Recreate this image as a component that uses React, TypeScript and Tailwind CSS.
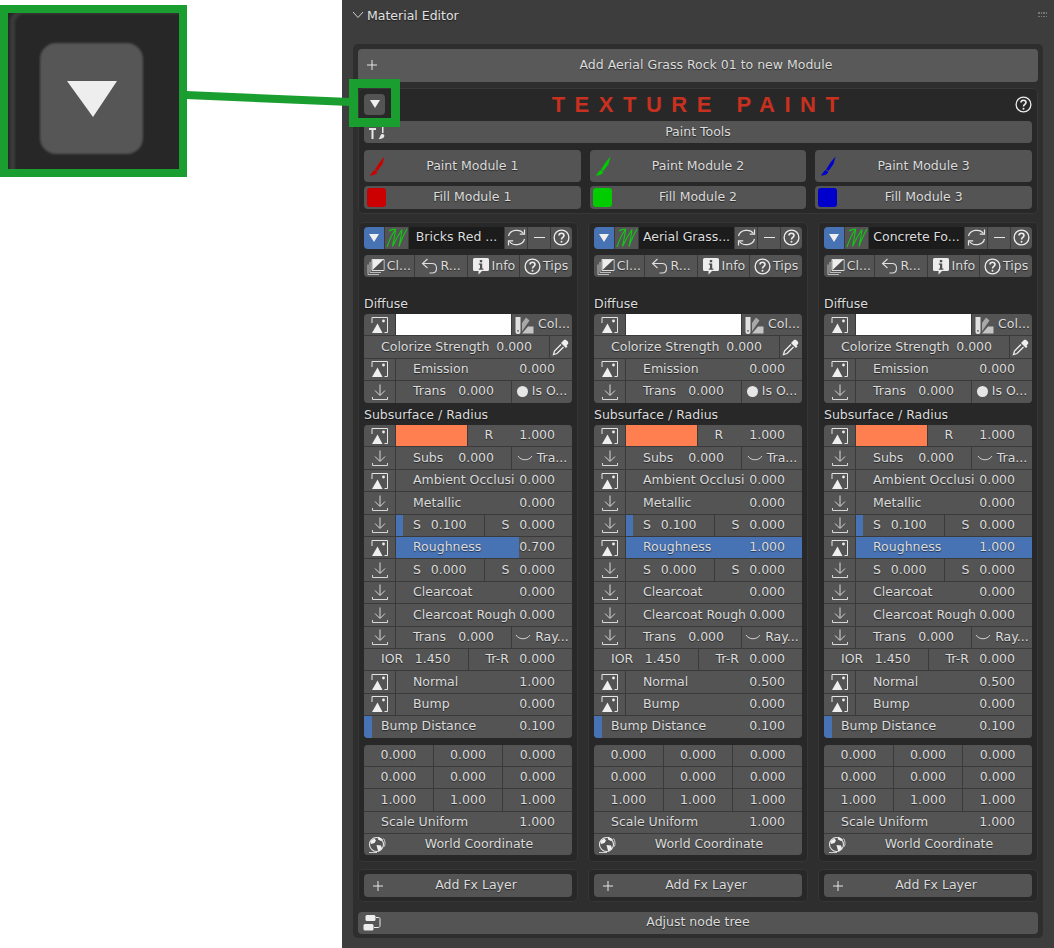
import type { ReactNode } from 'react'

const shadow = '[text-shadow:0_1px_1px_rgba(0,0,0,0.55)]'

function ImageIcon() {
  return (
    <svg width="18" height="18" viewBox="0 0 18 18" fill="none" className="shrink-0">
      <path d="M1 7V1.5h15.5v15h-3" stroke="#e6e6e6" strokeWidth="1" />
      <path d="M1 17 L6.5 7.5 L11.5 17Z" fill="#efefef" />
      <circle cx="12.5" cy="5" r="1.4" fill="#efefef" />
    </svg>
  )
}

function ImportIcon() {
  return (
    <svg width="18" height="18" viewBox="0 0 18 18" fill="none" stroke="#d8d8d8" strokeWidth="1" className="shrink-0">
      <path d="M9 1.5V12M4 7.5l5 5 5-5" />
      <path d="M1.5 14v2.5h15V14" />
    </svg>
  )
}

function HelpIcon({ size = 17 }: { size?: number }) {
  return (
    <svg width={size} height={size} viewBox="0 0 17 17" fill="none" className="shrink-0">
      <circle cx="8.5" cy="8.5" r="7.4" stroke="#ededed" strokeWidth="1.3" />
      <path d="M6 6.6c0-3.2 5-3.2 5 0 0 1.9-2.5 1.9-2.5 3.9" stroke="#ededed" strokeWidth="1.6" />
      <circle cx="8.5" cy="12.8" r="1" fill="#ededed" />
    </svg>
  )
}

function RefreshIcon() {
  return (
    <svg width="19" height="19" viewBox="0 0 19 19" fill="none" stroke="#e6e6e6" strokeWidth="1.2" className="shrink-0">
      <path d="M1.5 8C3 1.5 13 .5 16.5 5.5" />
      <path d="M17.5 1.5v4.7h-4.7" />
      <path d="M17.5 11C16 17.5 6 18.5 2.5 13.5" />
      <path d="M1.5 17.5v-4.7h4.7" />
    </svg>
  )
}

function ScriptM() {
  return (
    <svg width="22" height="20" viewBox="0 0 22 20" fill="none" stroke="#12c912" strokeWidth="1.1" className="shrink-0">
      <path d="M1 19C3 13 6 6 9.5 1.5 9 7 7.5 13 6.5 18.5 9.5 12 13 6 16 1.5 15.5 7 14 13 13 18.5 15 13 18 6 21 1" />
      <path d="M3 3c2-1.5 4-2 6.5-1.5" />
    </svg>
  )
}

function CopyIcon() {
  return (
    <svg width="18" height="18" viewBox="0 0 18 18" fill="none" className="shrink-0">
      <path d="M5 2.5h12v11H5z" stroke="#dedede" />
      <path d="M6 13L16.5 3v10z" fill="#4d4d4d" />
      <path d="M5.500 13L16 3H5.500z" fill="#eeeeee" />
      <path d="M3 5v10.500h11M1 7.500v10h11" stroke="#bdbdbd" />
    </svg>
  )
}

function UndoIcon() {
  return (
    <svg width="18" height="18" viewBox="0 0 18 18" fill="none" stroke="#dedede" strokeWidth="1.1" className="shrink-0">
      <path d="M6.500 2L1.500 6.500 6.500 11" />
      <path d="M2 6.500h9c6 0 6 9.500 0 9.500H8.500" />
    </svg>
  )
}

function InfoIcon() {
  return (
    <svg width="18" height="18" viewBox="0 0 18 18" className="shrink-0">
      <path d="M2.500 1h13A1.500 1.500 0 0 1 17 2.500v10a1.500 1.500 0 0 1-1.500 1.500H10l-3.500 3.500V14h-4A1.500 1.500 0 0 1 1 12.500v-10A1.500 1.500 0 0 1 2.500 1z" fill="#ededed" />
      <rect x="7.800" y="3" width="2.400" height="2.300" fill="#4f4f4f" />
      <path d="M6.800 6.500h3.400v5h1.200v1.300H6.800v-1.300H8V7.800H6.800z" fill="#4f4f4f" />
    </svg>
  )
}

function SwatchIcon() {
  return (
    <svg width="20" height="18" viewBox="0 0 20 18" className="shrink-0">
      <path d="M1.500 1h5v15a2 2 0 0 1-2 2h-1a2 2 0 0 1-2-2z" fill="#e0e0e0" />
      <path d="M8 15.500V7l4-5.500 3.500 3z" fill="#a8a8a8" />
      <path d="M8 17.500l6-7h5.500v7z" fill="#c4c4c4" />
      <circle cx="4" cy="14.800" r="0.900" fill="#555" />
    </svg>
  )
}

function DropperIcon() {
  return (
    <svg width="18" height="18" viewBox="0 0 18 18" fill="none" className="shrink-0">
      <path d="M10.500 3.500l1.500-1.500c1.500-1.500 5.500 2 4 4l-1.500 1.500 1 1-1.500 1.500-5-5 1.500-1.500z" fill="#efefef" />
      <path d="M9 6.500L2.500 13 1.500 16.500 5 15.500 11.500 9" stroke="#efefef" strokeWidth="1.300" />
    </svg>
  )
}

function GlobeIcon() {
  return (
    <svg width="18" height="18" viewBox="0 0 18 18" fill="none" className="shrink-0">
      <circle cx="8.500" cy="8.500" r="7" stroke="#e6e6e6" strokeWidth="1.100" />
      <path d="M2.500 5l4-2.500 1.500 2-1.500 2.500L3 8zM8.500 9l4.500.500 1 3-3.500 3-1-2.500z" fill="#efefef" />
      <path d="M10 1c2 .3 4 1.500 5 3l-2 1-3-1.500z" fill="#efefef" />
      <path d="M15.500 2.500c1.500 2 2 5 1 8M1 16.500h8" stroke="#cfcfcf" />
    </svg>
  )
}

function BrushIcon({ color }: { color: string }) {
  return (
    <svg width="16" height="20" viewBox="0 0 16 20" className="shrink-0">
      <path d="M15.500 0.500L13.500 8 8.500 15 6 13.500 10.500 6.500z" fill={color} />
      <path d="M5.500 14l2.700 1.700c-.5 2.500-3 3.800-7.700 3.800 2-1 2.500-3.800 5-5.500z" fill={color} />
    </svg>
  )
}

function ToolsIcon() {
  return (
    <svg width="18" height="17" viewBox="0 0 18 17" className="shrink-0">
      <rect x="0" y="0" width="7" height="4" fill="#e6e6e6" />
      <rect x="0" y="5" width="7" height="2" fill="#e6e6e6" />
      <rect x="2.500" y="7" width="2" height="9" fill="#e6e6e6" />
      <rect x="13" y="0" width="1.500" height="10" fill="#e6e6e6" />
      <path d="M12.500 11c2.500-.5 3.500 1.500 2.500 3-.8 1.500-3 2-5.500 2 1.500-.8 1.500-3.500 3-5z" fill="#e6e6e6" />
    </svg>
  )
}

function NodeTreeIcon() {
  return (
    <svg width="18" height="18" viewBox="0 0 18 18" fill="none" className="shrink-0">
      <rect x="2.500" y="1" width="10" height="6" rx="1.500" fill="#ededed" />
      <rect x="0.500" y="10" width="10" height="6.500" rx="1.500" fill="#ededed" />
      <path d="M13 3.500h2.500c1.500 0 1.500 1 1.500 2v6c0 1.500-1 2-2 2H11" stroke="#ededed" />
    </svg>
  )
}

function PlusIcon() {
  return (
    <svg width="12" height="12" viewBox="0 0 12 12" stroke="#e6e6e6" className="shrink-0">
      <path d="M6 1v10M1 6h10" />
    </svg>
  )
}

function Triangle({ className }: { className?: string }) {
  return (
    <svg viewBox="0 0 10 8" className={className}>
      <path d="M0 0h10L5 8z" fill="#efefef" />
    </svg>
  )
}

function Cell({ children, className = '', style }: { children?: ReactNode; className?: string; style?: React.CSSProperties }) {
  return (
    <div className={`relative flex min-w-0 items-center overflow-hidden whitespace-nowrap bg-[#545454] ${className}`} style={style}>
      {children}
    </div>
  )
}

// blender style number field: label left, value right, optional slider fill
function Field({ label, value, fill, className = 'flex-1' }: { label?: string; value: string; fill?: number; className?: string }) {
  return (
    <Cell className={`justify-between px-[17px] ${className}`}>
      {fill !== undefined && <div className="absolute inset-y-0 left-0 bg-[#4772b3]" style={{ width: `${fill * 100}%` }} />}
      <span className={`relative ${shadow}`}>{label}</span>
      <span className={`relative ${shadow}`}>{value}</span>
    </Cell>
  )
}

function IconCell({ kind }: { kind: 'image' | 'import' }) {
  return (
    <Cell className="w-[31px] shrink-0 justify-center">
      {kind === 'image' ? <ImageIcon /> : <ImportIcon />}
    </Cell>
  )
}

function Row({ children }: { children: ReactNode }) {
  return <div className="flex h-[21.4px] gap-px">{children}</div>
}

function Group({ children }: { children: ReactNode }) {
  return <div className="flex flex-col gap-px overflow-hidden rounded-[4px] bg-[#3a3a3a]">{children}</div>
}

function IconText({ icon, text, className = '' }: { icon: ReactNode; text: string; className?: string }) {
  return (
    <Cell className={`h-full justify-center gap-[2px] ${className}`}>
      {icon}
      <span className={shadow}>{text}</span>
    </Cell>
  )
}

function WideButton({ icon, text, className = '' }: { icon: ReactNode; text: string; className?: string }) {
  return (
    <div className={`flex items-center rounded-[4px] bg-[#545454] px-[6px] ${className}`}>
      <div className="flex w-[16px] shrink-0 items-center justify-center">{icon}</div>
      <span className={`flex-1 text-center ${shadow}`}>{text}</span>
    </div>
  )
}

function ModuleColumn({ name, roughness, normal }: { name: string; roughness: number; normal: string }) {
  return (
    <div className="flex flex-col">
      <div className="flex h-[640px] flex-col rounded-[5px] border border-[#363636] bg-[#282828] px-[5px] pt-[4px]">
        <div className="flex h-[21.5px] gap-px overflow-hidden rounded-[4px] bg-[#3a3a3a]">
          <div className="flex w-[20px] shrink-0 items-center justify-center bg-[#4772b3]">
            <Triangle className="w-[10px]" />
          </div>
          <Cell className="w-[23px] shrink-0 justify-center">
            <ScriptM />
          </Cell>
          <div className={`flex min-w-0 flex-1 items-center justify-center bg-[#1c1c1c] whitespace-nowrap ${shadow}`}>{name}</div>
          <Cell className="w-[22px] shrink-0 justify-center">
            <RefreshIcon />
          </Cell>
          <Cell className="w-[22px] shrink-0 justify-center">
            <div className="h-px w-[11px] bg-[#e6e6e6]" />
          </Cell>
          <Cell className="w-[21px] shrink-0 justify-center">
            <HelpIcon />
          </Cell>
        </div>
        <div className="mt-[6.500px] flex h-[22px] gap-px overflow-hidden rounded-[4px] bg-[#3a3a3a]">
          <IconText icon={<CopyIcon />} text="Cl..." className="flex-[50]" />
          <IconText icon={<UndoIcon />} text="R..." className="flex-[52]" />
          <IconText icon={<InfoIcon />} text="Info" className="flex-[52]" />
          <IconText icon={<HelpIcon />} text="Tips" className="flex-[52]" />
        </div>

        <div className={`mt-[16px] h-[21px] leading-[21px] ${shadow}`}>Diffuse</div>
        <Group>
          <Row>
            <IconCell kind="image" />
            <div className="w-[115px] shrink-0 bg-white" />
            <Cell className="flex-1 justify-center gap-[4px]">
              <SwatchIcon />
              <span className={shadow}>Col...</span>
            </Cell>
          </Row>
          <Row>
            <Field label="Colorize Strength" value="0.000" />
            <Cell className="w-[22px] shrink-0 justify-center">
              <DropperIcon />
            </Cell>
          </Row>
          <Row>
            <IconCell kind="image" />
            <Field label="Emission" value="0.000" />
          </Row>
          <Row>
            <IconCell kind="import" />
            <Field label="Trans" value="0.000" className="w-[115px] shrink-0" />
            <Cell className="flex-1 justify-center gap-[4px]">
              <div className="size-[11px] rounded-full bg-[#e6e6e6]" />
              <span className={shadow}>Is O...</span>
            </Cell>
          </Row>
        </Group>

        <div className={`mt-[1px] h-[21.500px] leading-[21.500px] ${shadow}`}>Subsurface / Radius</div>
        <Group>
          <Row>
            <IconCell kind="image" />
            <div className="flex-1 bg-[#ff7f50]" />
            <Field label="R" value="1.000" />
          </Row>
          <Row>
            <IconCell kind="import" />
            <Field label="Subs" value="0.000" className="w-[115px] shrink-0" />
            <Cell className="flex-1 justify-center gap-[4px]">
              <svg width="16" height="6" viewBox="0 0 16 6" fill="none" stroke="#cfcfcf" className="shrink-0">
                <path d="M1 1c3 5 11 5 14 0" />
              </svg>
              <span className={shadow}>Tra...</span>
            </Cell>
          </Row>
          <Row>
            <IconCell kind="image" />
            <Field label="Ambient Occlusi" value="0.000" />
          </Row>
          <Row>
            <IconCell kind="import" />
            <Field label="Metallic" value="0.000" />
          </Row>
          <Row>
            <IconCell kind="import" />
            <Field label="S" value="0.100" fill={0.08} />
            <Field label="S" value="0.000" />
          </Row>
          <Row>
            <IconCell kind="image" />
            <Field label="Roughness" value={roughness.toFixed(3)} fill={roughness} />
          </Row>
          <Row>
            <IconCell kind="import" />
            <Field label="S" value="0.000" />
            <Field label="S" value="0.000" />
          </Row>
          <Row>
            <IconCell kind="import" />
            <Field label="Clearcoat" value="0.000" />
          </Row>
          <Row>
            <IconCell kind="import" />
            <Field label="Clearcoat Rough" value="0.000" />
          </Row>
          <Row>
            <IconCell kind="import" />
            <Field label="Trans" value="0.000" className="w-[115px] shrink-0" />
            <Cell className="flex-1 justify-center gap-[4px]">
              <svg width="16" height="6" viewBox="0 0 16 6" fill="none" stroke="#cfcfcf" className="shrink-0">
                <path d="M1 1c3 5 11 5 14 0" />
              </svg>
              <span className={shadow}>Ray...</span>
            </Cell>
          </Row>
          <Row>
            <Field label="IOR" value="1.450" />
            <Field label="Tr-R" value="0.000" />
          </Row>
          <Row>
            <IconCell kind="image" />
            <Field label="Normal" value={normal} />
          </Row>
          <Row>
            <IconCell kind="image" />
            <Field label="Bump" value="0.000" />
          </Row>
          <Row>
            <Field label="Bump Distance" value="0.100" fill={0.04} />
          </Row>
        </Group>

        <div className="mt-[7px]">
          <Group>
            {[0, 0, 1].map((v, i) => (
              <Row key={i}>
                {[0, 1, 2].map((c) => (
                  <Cell key={c} className={`flex-1 justify-center ${shadow}`}>
                    {v.toFixed(3)}
                  </Cell>
                ))}
              </Row>
            ))}
            <Row>
              <Field label="Scale Uniform" value="1.000" />
            </Row>
            <Row>
              <Cell className="flex-1 pl-[4px]">
                <GlobeIcon />
                <span className={`flex-1 text-center ${shadow}`}>World Coordinate</span>
              </Cell>
            </Row>
          </Group>
        </div>
      </div>

      <div className="mt-[7px] h-[33px] rounded-[5px] border border-[#363636] bg-[#282828] px-[5px] pt-[4px]">
        <WideButton icon={<PlusIcon />} text="Add Fx Layer" className="h-[23px]" />
      </div>
    </div>
  )
}

export default function App() {
  return (
    <div className="relative flex h-[948px] w-[1054px] overflow-hidden bg-white font-['DejaVu_Sans',sans-serif] text-[12.500px] text-[#dcdcdc]">
      <div className="w-[342px] shrink-0" />

      <div className="flex min-w-0 flex-1 flex-col bg-[#3d3d3d]">
        {/* Panel header */}
        <div className="flex h-[44px] shrink-0 items-start pt-[7px] pl-[10px] pr-[7px]">
          <svg width="12" height="8" viewBox="0 0 12 8" fill="none" stroke="#d0d0d0" className="mt-[4px] shrink-0">
            <path d="M1 1l5 5.500L11 1" />
          </svg>
          <span className={`ml-[3px] flex-1 leading-[17px] text-[#e2e2e2] ${shadow}`}>Material Editor</span>
          <div className="mt-[5px] grid grid-cols-4 gap-x-px gap-y-[2px]">
            {Array.from({ length: 8 }).map((_, i) => (
              <div key={i} className="size-[1.500px] bg-[#777]" />
            ))}
          </div>
        </div>

        {/* Main box */}
        <div className="mx-[11px] flex h-[894px] flex-col rounded-[5px] bg-[#2e2e2e] px-[5px] pt-[5px]">
          <WideButton icon={<PlusIcon />} text="Add Aerial Grass Rock 01 to new Module" className="h-[32.500px] shrink-0 bg-[#595959]" />

          <div className="mt-[6.500px] flex h-[126px] shrink-0 flex-col rounded-[5px] border border-[#383838] bg-[#282828] px-[5px] pt-[4px]">
            <div className="flex h-[22px] items-center">
              <div className="flex size-[21px] items-center justify-center rounded-[4px] bg-[#545454]">
                <Triangle className="w-[10px]" />
              </div>
              <div className="flex-1 text-center font-['Liberation_Sans_Narrow','Liberation_Sans',sans-serif] text-[22px] font-bold tracking-[9.500px] text-[#c8301f]">
                TEXTURE PAINT
              </div>
              <HelpIcon />
            </div>
            <div className="mt-[6px] flex h-[22px] items-center rounded-[4px] bg-[#545454] pl-[5px]">
              <div className="-mt-[1px] w-[18px] shrink-0">
                <ToolsIcon />
              </div>
              <span className={`flex-1 pr-[23px] text-center ${shadow}`}>Paint Tools</span>
            </div>
            <div className="mt-[7px] grid grid-cols-3 gap-x-[9px] gap-y-[4px]">
              {[
                { n: 1, c: '#cc0000' },
                { n: 2, c: '#00cc00' },
                { n: 3, c: '#0000cc' },
              ].map((m) => (
                <div key={m.n} className="flex h-[32px] items-center rounded-[4px] bg-[#545454] pl-[5px]">
                  <BrushIcon color={m.c} />
                  <span className={`flex-1 pr-[21px] text-center ${shadow}`}>Paint Module {m.n}</span>
                </div>
              ))}
              {[
                { n: 1, c: '#cc0000' },
                { n: 2, c: '#00cc00' },
                { n: 3, c: '#0000cc' },
              ].map((m) => (
                <div key={m.n} className="flex h-[23px] items-center rounded-[4px] bg-[#545454] pl-[3px]">
                  <div className="size-[19px] shrink-0 rounded-[3px]" style={{ backgroundColor: m.c }} />
                  <span className={`flex-1 pr-[22px] text-center ${shadow}`}>Fill Module {m.n}</span>
                </div>
              ))}
            </div>
          </div>

          <div className="mt-[8px] grid shrink-0 grid-cols-3 gap-x-[10px]">
            <ModuleColumn name="Bricks Red ..." roughness={0.7} normal="1.000" />
            <ModuleColumn name="Aerial Grass..." roughness={1} normal="0.500" />
            <ModuleColumn name="Concrete Fo..." roughness={1} normal="0.500" />
          </div>

          <div className="mt-[9.500px] flex h-[22px] shrink-0 items-center rounded-[4px] bg-[#545454] pl-[5px]">
            <NodeTreeIcon />
            <span className={`flex-1 pr-[23px] text-center ${shadow}`}>Adjust node tree</span>
          </div>
        </div>
      </div>

      {/* Callout: green frame, connector and magnified crop */}
      <div className="absolute left-0 top-[5px] h-[172px] w-[187px] overflow-hidden border-[8px] border-[#1a9e2f] bg-[#272727]">
        <div className="absolute left-[2px] top-[-4px] h-[200px] w-[200px] rounded-tl-[14px] border-l-[5px] border-t-[5px] border-[#3b3b3b] blur-[1px]" />
        <div className="absolute left-[32px] top-[30px] h-[111px] w-[103px] rounded-[16px] bg-[#565656] blur-[1px]" />
        <svg width="50" height="36" viewBox="0 0 50 36" className="absolute left-[59px] top-[68px] blur-[0.5px]">
          <path d="M0 0h50L26 36z" fill="#eeeeee" />
        </svg>
      </div>
      <svg width="165" height="20" viewBox="0 0 165 20" className="absolute left-[186px] top-[88px]">
        <path d="M0 3l164 7v8L0 11z" fill="#1a9e2f" />
      </svg>
      <div className="absolute left-[349px] top-[79px] h-[48px] w-[51px] border-[9px] border-[#1a9e2f]" />
    </div>
  )
}
